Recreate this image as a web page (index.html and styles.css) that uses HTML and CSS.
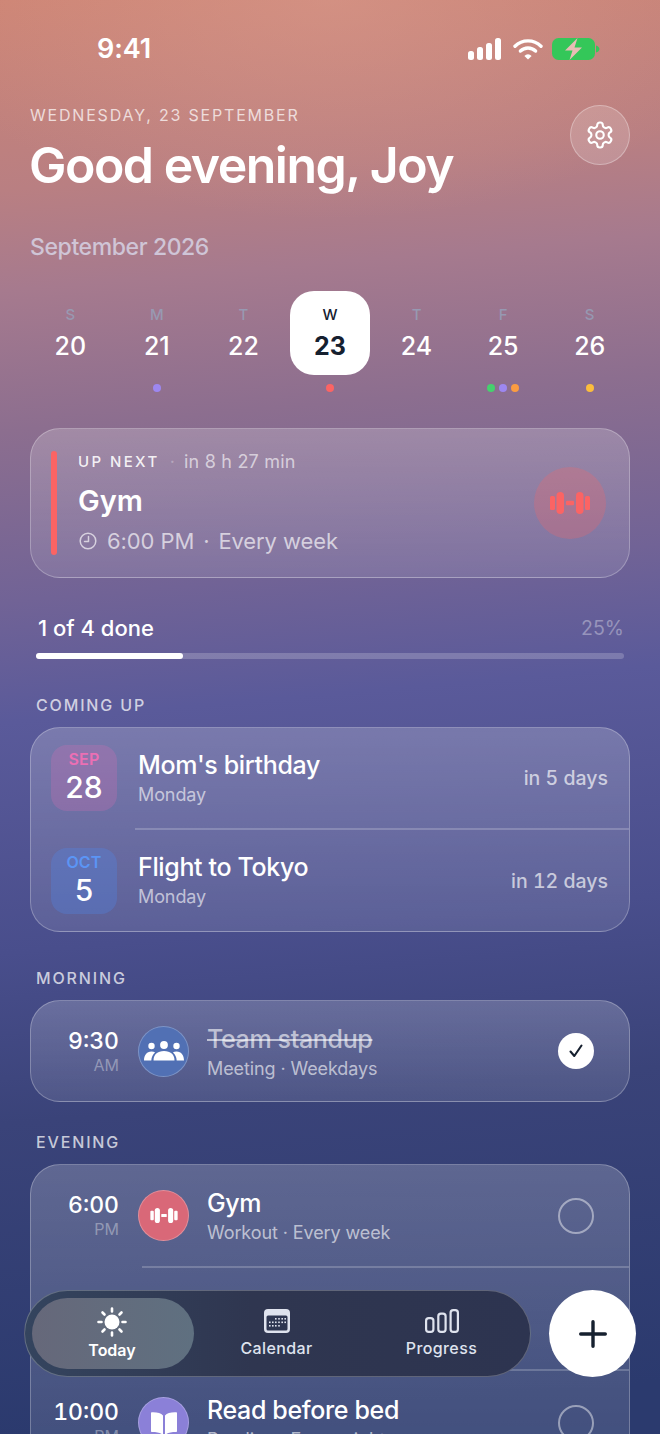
FILE: index.html
```html
<!DOCTYPE html>
<html lang="en">
<head>
  <meta charset="UTF-8" />
  <title>Today</title>
  <link rel="stylesheet" href="styles.css">
</head>
<body>
  <svg class="sprite" width="0" height="0">
    <symbol id="dumbbell" viewBox="0 0 40 22">
      <rect x="0" y="4" width="5" height="14" rx="1.5" />
      <rect x="6.5" y="0" width="7.5" height="22" rx="3.75" />
      <rect x="16" y="8.7" width="8" height="4.6" rx="1" />
      <rect x="26" y="0" width="7.5" height="22" rx="3.75" />
      <rect x="35" y="4" width="5" height="14" rx="1.5" />
    </symbol>
  </svg>

  <div class="phone">
    <div class="status">
      <span class="status-time">9:41</span>
      <div class="status-icons">
        <svg width="34" height="22" viewBox="0 0 34 22" fill="#fff">
          <rect x="0" y="13" width="6" height="9" rx="2.5" />
          <rect x="9" y="9" width="6" height="13" rx="2.5" />
          <rect x="18" y="5" width="6" height="17" rx="2.5" />
          <rect x="27" y="0" width="6" height="22" rx="2.5" />
        </svg>
        <svg width="30" height="22" viewBox="0 0 30 22" fill="none" stroke="#fff" stroke-width="3.4" stroke-linecap="round">
          <path d="M2 8.2a18.5 18.5 0 0 1 26 0" />
          <path d="M7.4 13a11 11 0 0 1 15.2 0" />
          <path d="M15 21.5l-3.6-3.6a5 5 0 0 1 7.2 0z" fill="#fff" stroke="none" />
        </svg>
        <svg width="48" height="22" viewBox="0 0 48 22">
          <rect x="0" y="0" width="43" height="22" rx="6.5" fill="#34c759" />
          <path d="M44 7.5c2 .5 3.5 2 3.5 3.5s-1.5 3-3.5 3.5z" fill="#34c759" />
          <path d="M25.5 0L13 12.6h7.5L17.5 22 30 9.4h-7.5z" fill="#e8bdb5" />
        </svg>
      </div>
    </div>

    <header class="head">
      <div>
        <p class="head-date">WEDNESDAY, 23 SEPTEMBER</p>
        <h1>Good evening, Joy</h1>
      </div>
      <button class="gear">
        <svg width="30" height="30" viewBox="0 0 24 24" fill="none" stroke="#fff" stroke-width="1.7" stroke-linecap="round" stroke-linejoin="round">
          <path d="M12.22 2h-.44a2 2 0 0 0-2 2v.18a2 2 0 0 1-1 1.73l-.43.25a2 2 0 0 1-2 0l-.15-.08a2 2 0 0 0-2.73.73l-.22.38a2 2 0 0 0 .73 2.73l.15.1a2 2 0 0 1 1 1.72v.51a2 2 0 0 1-1 1.74l-.15.09a2 2 0 0 0-.73 2.73l.22.38a2 2 0 0 0 2.73.73l.15-.08a2 2 0 0 1 2 0l.43.25a2 2 0 0 1 1 1.73V20a2 2 0 0 0 2 2h.44a2 2 0 0 0 2-2v-.18a2 2 0 0 1 1-1.73l.43-.25a2 2 0 0 1 2 0l.15.08a2 2 0 0 0 2.73-.73l.22-.39a2 2 0 0 0-.73-2.73l-.15-.08a2 2 0 0 1-1-1.74v-.5a2 2 0 0 1 1-1.74l.15-.09a2 2 0 0 0 .73-2.73l-.22-.38a2 2 0 0 0-2.73-.73l-.15.08a2 2 0 0 1-2 0l-.43-.25a2 2 0 0 1-1-1.73V4a2 2 0 0 0-2-2z" />
          <circle cx="12" cy="12" r="3" />
        </svg>
      </button>
    </header>

    <h2 class="month">September 2026</h2>

    <div class="week">
      <div class="day"><span class="day-name">S</span><span class="day-num">20</span><div class="dots"></div></div>
      <div class="day"><span class="day-name">M</span><span class="day-num">21</span><div class="dots"><i class="dot purple"></i></div></div>
      <div class="day"><span class="day-name">T</span><span class="day-num">22</span><div class="dots"></div></div>
      <div class="day active"><span class="day-name">W</span><span class="day-num">23</span><div class="dots"><i class="dot red"></i></div></div>
      <div class="day"><span class="day-name">T</span><span class="day-num">24</span><div class="dots"></div></div>
      <div class="day"><span class="day-name">F</span><span class="day-num">25</span><div class="dots"><i class="dot green"></i><i class="dot purple"></i><i class="dot orange"></i></div></div>
      <div class="day"><span class="day-name">S</span><span class="day-num">26</span><div class="dots"><i class="dot yellow"></i></div></div>
    </div>

    <section class="card next">
      <div class="next-bar"></div>
      <div class="next-body">
        <p class="next-top"><b>UP NEXT</b><i>·</i><span>in 8 h 27 min</span></p>
        <p class="next-title">Gym</p>
        <p class="next-meta">
          <svg width="18" height="18" viewBox="0 0 18 18" fill="none" stroke="currentColor" stroke-width="1.5" stroke-linecap="round" stroke-linejoin="round">
            <circle cx="9" cy="9" r="7.8" />
            <path d="M9.5 4.5V9.5H5.5" />
          </svg>
          <span>6:00 PM</span><span>·</span><span>Every week</span>
        </p>
      </div>
      <div class="next-icon"><svg width="40" height="22" fill="#fb6464"><use href="#dumbbell" /></svg></div>
    </section>

    <div class="progress">
      <div class="progress-top"><span>1 of 4 done</span><em>25%</em></div>
      <div class="progress-track"><div class="progress-fill" style="width: 25%"></div></div>
    </div>

    <h3 class="label">COMING UP</h3>
    <section class="card">
      <div class="event first">
        <div class="tile pink"><span>SEP</span><b>28</b></div>
        <div class="event-text"><p class="title">Mom's birthday</p><p class="sub">Monday</p></div>
        <span class="event-when">in 5 days</span>
      </div>
      <div class="event line">
        <div class="tile blue"><span>OCT</span><b>5</b></div>
        <div class="event-text"><p class="title">Flight to Tokyo</p><p class="sub">Monday</p></div>
        <span class="event-when">in 12 days</span>
      </div>
    </section>

    <h3 class="label">MORNING</h3>
    <section class="card">
      <div class="task short">
        <div class="time"><b>9:30</b><span>AM</span></div>
        <div class="badge team">
          <svg width="40" height="20" viewBox="0 0 40 20" fill="#fff">
            <circle cx="7.5" cy="5" r="3.2" />
            <circle cx="20" cy="4" r="3.9" />
            <circle cx="32.5" cy="5" r="3.2" />
            <path d="M0 19.5c0-5 2.5-9 7.5-9 1.5 0 2.7.3 3.6 1-2.3 2-3.6 4.5-3.8 8z" />
            <path d="M40 19.5c0-5-2.5-9-7.5-9-1.5 0-2.7.3-3.6 1 2.3 2 3.6 4.5 3.8 8z" />
            <path d="M9.5 19.5c0-6 4-9.5 10.5-9.5s10.5 3.5 10.5 9.5z" />
          </svg>
        </div>
        <div class="task-text"><p class="title done">Team standup</p><p class="sub">Meeting · Weekdays</p></div>
        <div class="check on">
          <svg width="18" height="18" viewBox="0 0 18 18" fill="none" stroke="#16202f" stroke-width="2.1" stroke-linecap="round" stroke-linejoin="round">
            <path d="M3.5 9.5L7.3 14 14.5 3.5" />
          </svg>
        </div>
      </div>
    </section>

    <h3 class="label tight">EVENING</h3>
    <section class="card card-open">
      <div class="task">
        <div class="time"><b>6:00</b><span>PM</span></div>
        <div class="badge gym"><svg width="28" height="15" fill="#fff"><use href="#dumbbell" /></svg></div>
        <div class="task-text"><p class="title">Gym</p><p class="sub">Workout · Every week</p></div>
        <div class="check"></div>
      </div>
      <div class="task line"></div>
      <div class="task line last">
        <div class="time"><b>10:00</b><span>PM</span></div>
        <div class="badge book">
          <svg width="26" height="24" viewBox="0 0 26 24" fill="#fff">
            <path d="M12 4.5C10 2 6 1 1 1.2c-.6 0-1 .4-1 1V20c0 .6.4 1 1 1 5 0 8.5.8 11 3z" />
            <path d="M14 4.5C16 2 20 1 25 1.2c.6 0 1 .4 1 1V20c0 .6-.4 1-1 1-5 0-8.5.8-11 3z" />
          </svg>
        </div>
        <div class="task-text"><p class="title">Read before bed</p><p class="sub">Reading · Every night</p></div>
        <div class="check"></div>
      </div>
    </section>

    <nav class="nav">
      <a class="nav-item active">
        <svg width="30" height="30" viewBox="0 0 30 30" fill="#fff" stroke="#fff" stroke-width="2.6" stroke-linecap="round">
          <circle cx="15" cy="15" r="7.5" stroke="none" />
          <path d="M15 1.5V4.5M15 25.5v3M1.5 15H4.5M25.5 15h3M5.5 5.5L7.5 7.5M22.5 22.5l2 2M5.500 24.500l2-2M22.500 7.500l2-2" />
        </svg>
        <span>Today</span>
      </a>
      <a class="nav-item">
        <svg width="26" height="24" viewBox="0 0 26 24">
          <rect width="26" height="24" rx="4" fill="#dfe3ee" />
          <rect x="2.5" y="6.5" width="21" height="15" rx="1.5" fill="#2e3651" />
          <g fill="#dfe3ee">
            <rect x="11" y="9" width="1.6" height="1.6" /><rect x="14.2" y="9" width="1.6" height="1.6" /><rect x="17.4" y="9" width="1.6" height="1.6" /><rect x="20.4" y="9" width="1.6" height="1.6" />
            <rect x="5" y="12.5" width="1.6" height="1.6" /><rect x="8" y="12.5" width="1.6" height="1.6" /><rect x="11" y="12.5" width="1.6" height="1.6" /><rect x="14.2" y="12.5" width="1.6" height="1.6" /><rect x="17.4" y="12.5" width="1.6" height="1.6" /><rect x="20.4" y="12.5" width="1.6" height="1.6" />
            <rect x="5" y="16" width="1.6" height="1.6" /><rect x="8" y="16" width="1.6" height="1.6" /><rect x="11" y="16" width="1.6" height="1.6" /><rect x="14.2" y="16" width="1.6" height="1.6" />
          </g>
        </svg>
        <span>Calendar</span>
      </a>
      <a class="nav-item">
        <svg width="34" height="24" viewBox="0 0 34 24" fill="none" stroke="#dfe3ee" stroke-width="2.2">
          <rect x="1.1" y="9.1" width="7.3" height="13.8" rx="2.6" />
          <rect x="13.3" y="4.6" width="7.3" height="18.3" rx="2.6" />
          <rect x="25.6" y="1.1" width="7.3" height="21.8" rx="2.6" />
        </svg>
        <span>Progress</span>
      </a>
    </nav>
    <button class="fab">
      <svg width="28" height="28" viewBox="0 0 28 28" stroke="#16202f" stroke-width="3.4" stroke-linecap="round">
        <path d="M14 1.7v24.6M1.7 14h24.6" />
      </svg>
    </button>
  </div>
</body>
</html>
```

FILE: styles.css
```css
* {
  box-sizing: border-box;
}

html, body {
  margin: 0;
  padding: 0;
}

p, h1, h2, h3 {
  margin: 0;
}

body {
  font-family: Inter, "Liberation Sans", sans-serif;
  color: #fff;
  overflow: hidden;
}

.sprite {
  position: absolute;
}

.phone {
  position: relative;
  width: 660px;
  height: 1434px;
  overflow: hidden;
  padding: 0 30px;
  background:
    radial-gradient(ellipse 420px 220px at 330px 0, rgba(222, 160, 145, 0.45), rgba(222, 160, 145, 0)),
    linear-gradient(175deg, #cd8474 0, #b97f82 190px, #a67a8e 290px, #8c6e8f 430px, #716396 600px, #5a5a9a 720px, #494e8c 950px, #3a4379 1120px, #2b3a6e 1434px);
}

/* status bar */
.status {
  height: 98px;
  padding: 35px 30px 0 67px;
  display: flex;
  justify-content: space-between;
  align-items: flex-start;
}

.status-time {
  font-size: 27px;
  font-weight: 600;
  line-height: 28px;
  letter-spacing: -0.1px;
}

.status-icons {
  display: flex;
  align-items: center;
  gap: 9px;
  height: 28px;
}

.status-icons svg:first-child {
  margin-right: 2px;
}

/* header */
.head {
  display: flex;
  justify-content: space-between;
  align-items: flex-start;
}

.head-date {
  margin-top: 8px;
  font-size: 16px;
  line-height: 18px;
  letter-spacing: 1.8px;
  color: rgba(255, 255, 255, 0.72);
}

h1 {
  margin-top: 12px;
  margin-left: -1px;
  font-size: 50px;
  line-height: 58px;
  font-weight: 600;
  letter-spacing: -1.5px;
}

.gear {
  width: 60px;
  height: 60px;
  margin-top: 7px;
  padding: 0;
  border-radius: 50%;
  border: 1.5px solid rgba(255, 255, 255, 0.3);
  background: rgba(255, 255, 255, 0.16);
  display: flex;
  align-items: center;
  justify-content: center;
}

.month {
  margin-top: 40px;
  font-size: 23px;
  line-height: 26px;
  font-weight: 500;
  letter-spacing: -0.4px;
  color: rgba(222, 226, 245, 0.72);
}

/* week strip */
.week {
  margin: 31px -3px 0;
  display: grid;
  grid-template-columns: repeat(7, 1fr);
}

.day {
  display: flex;
  flex-direction: column;
  align-items: center;
  position: relative;
  height: 105px;
  padding-top: 15px;
}

.day-name {
  font-size: 15px;
  line-height: 18px;
  font-weight: 500;
  color: rgba(150, 165, 190, 0.75);
}

.day-num {
  margin-top: 6px;
  font-size: 25px;
  line-height: 32px;
  font-weight: 500;
}

.day.active::before {
  content: "";
  position: absolute;
  top: 0;
  left: 3px;
  width: 80px;
  height: 84px;
  background: #fff;
  border-radius: 24px;
}

.day.active .day-name,
.day.active .day-num {
  position: relative;
  color: #16202f;
}

.day.active .day-num {
  font-weight: 700;
}

.dots {
  position: absolute;
  top: 93px;
  display: flex;
  gap: 4px;
}

.dot {
  width: 8px;
  height: 8px;
  border-radius: 50%;
}

.purple { background: #9d87f0; }
.red { background: #fb6464; }
.green { background: #46d06e; }
.orange { background: #fb9c42; }
.yellow { background: #fbbd3d; }

/* cards */
.card {
  border-radius: 30px;
  border: 1.5px solid rgba(255, 255, 255, 0.26);
  background: linear-gradient(180deg, rgba(255, 255, 255, 0.2), rgba(255, 255, 255, 0.1));
}

.next {
  margin-top: 32px;
  height: 150px;
  padding: 22px 23px 22px 20px;
  display: flex;
  align-items: stretch;
}

.next-bar {
  width: 6px;
  border-radius: 3px;
  background: #fb6464;
}

.next-body {
  flex: 1;
  margin-left: 21px;
}

.next-top {
  display: flex;
  align-items: center;
  font-size: 18px;
  line-height: 22px;
  letter-spacing: 0.2px;
  color: rgba(255, 255, 255, 0.62);
}

.next-top b {
  font-size: 15px;
  font-weight: 500;
  letter-spacing: 2.4px;
  color: rgba(255, 255, 255, 0.9);
}

.next-top i {
  margin: 0 9px 0 10px;
  font-style: normal;
  color: rgba(255, 255, 255, 0.3);
}

.next-title {
  margin-top: 10px;
  font-size: 29px;
  line-height: 36px;
  font-weight: 600;
}

.next-meta {
  margin-top: 7px;
  display: flex;
  align-items: center;
  gap: 9px;
  font-size: 22px;
  line-height: 30px;
  letter-spacing: -0.1px;
  color: rgba(255, 255, 255, 0.66);
}

.next-meta svg {
  margin-left: 1px;
  margin-right: 1px;
}

.next-icon {
  width: 72px;
  height: 72px;
  align-self: center;
  border-radius: 50%;
  background: rgba(251, 100, 100, 0.26);
  display: flex;
  align-items: center;
  justify-content: center;
}

/* progress */
.progress {
  margin: 36px 6px 0;
}

.progress-top {
  display: flex;
  justify-content: space-between;
  align-items: center;
  padding: 0 0 0 2px;
  height: 28px;
  font-size: 22px;
  font-weight: 500;
}

.progress-top em {
  font-style: normal;
  font-size: 19.5px;
  font-weight: 400;
  color: rgba(255, 255, 255, 0.35);
}

.progress-track {
  margin-top: 11px;
  height: 6px;
  border-radius: 3px;
  background: rgba(255, 255, 255, 0.2);
}

.progress-fill {
  height: 100%;
  border-radius: 3px;
  background: #fff;
}

.label {
  margin: 37px 0 13px 6px;
  font-size: 16px;
  line-height: 18px;
  font-weight: 500;
  letter-spacing: 1.85px;
  color: rgba(255, 255, 255, 0.72);
}

.label.tight {
  margin-top: 31px;
}

/* coming up */
.event {
  display: flex;
  align-items: center;
  height: 103px;
  padding: 2px 21px 0 20px;
  position: relative;
}

.event.first {
  height: 100px;
  padding-top: 0;
}

.line::before {
  content: "";
  position: absolute;
  top: 0;
  right: 0;
  height: 1.5px;
  background: rgba(255, 255, 255, 0.2);
}

.event.line::before {
  left: 104px;
}

.tile {
  width: 66px;
  height: 66px;
  border-radius: 16px;
  display: flex;
  flex-direction: column;
  align-items: center;
  padding-top: 5px;
}

.tile span {
  font-size: 16px;
  line-height: 18px;
  font-weight: 600;
  letter-spacing: 0.2px;
}

.tile b {
  font-size: 30px;
  line-height: 38px;
  font-weight: 500;
}

.tile.pink { background: rgba(236, 111, 180, 0.22); }
.tile.pink span { color: #ec6fb4; }
.tile.blue { background: rgba(80, 135, 235, 0.3); }
.tile.blue span { color: #5b95f5; }

.event-text,
.task-text {
  flex: 1;
}

.event-text {
  margin-left: 21px;
}

.task-text {
  padding-top: 2px;
}

.title {
  font-size: 25px;
  line-height: 30px;
  font-weight: 500;
  letter-spacing: -0.35px;
}

.sub {
  margin-top: 3px;
  font-size: 18px;
  line-height: 24px;
  letter-spacing: -0.1px;
  color: rgba(255, 255, 255, 0.62);
}

.event-when {
  font-size: 19.5px;
  font-weight: 500;
  font-variant-numeric: tabular-nums;
  color: rgba(255, 255, 255, 0.66);
}

/* tasks */
.task {
  display: flex;
  align-items: center;
  height: 101px;
  padding: 0 35px 0 0;
  position: relative;
}

.task.short {
  height: 100px;
}

.task.line {
  height: 103px;
}

.task.line.last {
  height: 107px;
}

.task.line::before {
  left: 111px;
}

.card-open {
  height: 320px;
}

.time {
  width: 88px;
  display: flex;
  flex-direction: column;
  align-items: flex-end;
}

.time b {
  font-size: 23px;
  line-height: 27px;
  font-weight: 500;
  font-variant-numeric: tabular-nums;
}

.time span {
  font-size: 16px;
  line-height: 20px;
  color: rgba(255, 255, 255, 0.36);
}

.badge {
  width: 51px;
  height: 51px;
  margin: 0 18px 0 19px;
  border-radius: 50%;
  border: 1.5px solid rgba(255, 255, 255, 0.25);
  display: flex;
  align-items: center;
  justify-content: center;
}

.badge.team { background: #5170b4; }
.badge.gym { background: #d96878; }
.badge.book { background: #8b80d8; }

.title.done {
  color: rgba(255, 255, 255, 0.6);
  text-decoration: line-through;
}

.check {
  width: 36px;
  height: 36px;
  border-radius: 50%;
  border: 2px solid rgba(255, 255, 255, 0.45);
  display: flex;
  align-items: center;
  justify-content: center;
}

.check.on {
  background: #fff;
  border: none;
}

/* tab bar, floats over the list */
.nav {
  position: absolute;
  left: 24px;
  top: 1290px;
  width: 507px;
  height: 87px;
  padding: 7px;
  display: grid;
  grid-template-columns: 162px 165px 165px;
  border-radius: 44px;
  border: 1.5px solid rgba(255, 255, 255, 0.24);
  background: linear-gradient(90deg, #34445e, #2f3650 45%, #2d3450);
}

.nav-item {
  display: flex;
  flex-direction: column;
  align-items: center;
  justify-content: center;
  gap: 5px;
  font-size: 16px;
  line-height: 20px;
  font-weight: 500;
  letter-spacing: 0.4px;
  color: #dfe3ee;
}

.nav-item.active {
  gap: 3px;
  padding: 0 2px 0 0;
  border-radius: 36px;
  font-weight: 600;
  letter-spacing: 0;
  color: #fff;
  background: linear-gradient(90deg, #66687a, #5f7080);
}

.fab {
  position: absolute;
  left: 549px;
  top: 1290px;
  width: 87px;
  height: 87px;
  padding: 0;
  border: none;
  border-radius: 50%;
  background: #fff;
  display: flex;
  align-items: center;
  justify-content: center;
}
```
